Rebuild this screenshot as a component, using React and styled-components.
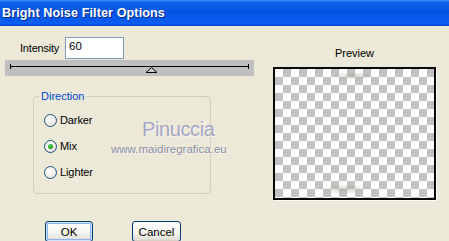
import React from "react";
import styled, { createGlobalStyle } from "styled-components";

const Global = createGlobalStyle`
  html, body { margin: 0; padding: 0; background: #ECE9D8; }
  body { font-family: "Liberation Sans", Arial, sans-serif; font-size: 11px; color: #000; }
`;

const Window = styled.div`
  position: relative;
  width: 449px;
  height: 241px;
  background: #ECE9D8;
  overflow: hidden;
  display: flex;
  flex-direction: column;
`;

const TitleBar = styled.div`
  height: 26px;
  flex: none;
  display: flex;
  align-items: center;
  padding-left: 2px;
  background: linear-gradient(180deg, #3A8CF8 0%, #0F63EC 10%, #0554E4 45%, #075BEE 80%, #0A5FF2 90%, #0044CC 100%);
  color: #fff;
  font-weight: bold;
  font-size: 12.6px;
  letter-spacing: 0.1px;
  text-shadow: 1px 1px 0 #0A2A8A;
`;

const Body = styled.div`
  display: flex;
  flex: 1;
`;

const LeftCol = styled.div`
  width: 273px;
  display: flex;
  flex-direction: column;
`;

const RightCol = styled.div`
  width: 163px;
  display: flex;
  flex-direction: column;
  align-items: center;
`;

const IntensityRow = styled.div`
  display: flex;
  align-items: center;
  margin-top: 11px;
  padding-left: 20px;
  height: 22px;
`;

const Label = styled.span`
  width: 45px;
  letter-spacing: -0.2px;
`;

const NumberInput = styled.div`
  box-sizing: border-box;
  width: 59px;
  height: 22px;
  background: #fff;
  border: 1px solid #7F9DB9;
  padding: 2px 0 0 3px;
  font-size: 11.5px;
`;

const SliderBand = styled.div`
  margin: 1px 0 0 5px;
  width: 248px;
  height: 16px;
  background: #BFBFBF;
  box-shadow: 1px 0 1px #C8C8C4;
`;

const GroupBox = styled.div`
  box-sizing: border-box;
  margin: 20px 0 0 33px;
  width: 178px;
  height: 98px;
  border: 1px solid #D0CFC0;
  border-radius: 4px;
  display: flex;
  flex-direction: column;
`;

const Legend = styled.div`
  margin: -7px 0 0 5px;
  padding: 0 2px;
  width: fit-content;
  line-height: 13px;
  background: #ECE9D8;
  color: #0046D5;
`;

const RadioList = styled.div`
  padding: 4px 0 0 10px;
  display: flex;
  flex-direction: column;
`;

const RadioRow = styled.div`
  height: 26px;
  display: flex;
  align-items: center;
  gap: 3px;
`;

const RadioCircle = styled.span`
  box-sizing: border-box;
  width: 13px;
  height: 13px;
  border-radius: 50%;
  border: 1px solid #1C5180;
  background: radial-gradient(circle at 35% 35%, #FFFFFF 0%, #F4F3EE 45%, #D8D6CB 100%);
  display: flex;
  align-items: center;
  justify-content: center;
  &::after {
    content: "";
    display: ${(p) => (p.$checked ? "block" : "none")};
    width: 5px;
    height: 5px;
    border-radius: 50%;
    background: radial-gradient(circle at 40% 40%, #5BD65B 0%, #21A121 60%, #1A8A1A 100%);
  }
`;

const RadioText = styled.span`
  letter-spacing: -0.1px;
`;

const ButtonRow = styled.div`
  display: flex;
  gap: 39px;
  margin-top: 27px;
  padding-left: 45px;
`;

const Button = styled.div`
  box-sizing: border-box;
  width: ${(p) => p.$w}px;
  height: 21px;
  border: 1px solid #003C74;
  border-radius: 3px;
  background: linear-gradient(180deg, #FFFFFF 0%, #F5F5F1 55%, #E6E5DD 85%, #D7D2C6 100%);
  box-shadow: ${(p) =>
    p.$default
      ? "inset 0 0 0 1px #CEE3FC, inset 0 0 0 2px #8DB2EE"
      : "inset 0 -1px 0 #D6D0C5"};
  display: flex;
  align-items: center;
  justify-content: center;
  font-size: 11.5px;
`;

const PreviewLabel = styled.div`
  margin-top: 21px;
  line-height: 13px;
  font-size: 11px;
`;

const PreviewBox = styled.div`
  box-sizing: border-box;
  margin-top: 7px;
  width: 163px;
  height: 133px;
  border: 2px solid #0A0A0A;
  box-shadow: 1px 1px 0 #FBFBF8;
  background:
    radial-gradient(ellipse 22px 4px at 78px 7px, rgba(160,155,140,0.45), transparent),
    radial-gradient(ellipse 26px 5px at 70px 120px, rgba(160,155,140,0.45), transparent),
    repeating-conic-gradient(#C2C2C2 0 25%, #FFFFFF 0 50%) 0 0 / 16px 16px;
`;

const Watermark = styled.div`
  position: absolute;
  left: 111px;
  top: 119px;
  display: flex;
  flex-direction: column;
  pointer-events: none;
`;

const WmName = styled.span`
  margin-left: 31px;
  font-size: 20px;
  line-height: 20px;
  letter-spacing: -0.4px;
  color: #A6A6C2;
  text-shadow: 1px 1px 0 #F6F6F6;
`;

const WmUrl = styled.span`
  margin-top: 4px;
  font-size: 11.5px;
  line-height: 12px;
  color: #8E8EA2;
  text-shadow: 1px 1px 0 #F4F4F4;
`;

function Slider() {
  return (
    <SliderBand>
      <svg width="248" height="16" viewBox="0 0 248 16">
        <line x1="6" y1="6.5" x2="243" y2="6.5" stroke="#000" strokeWidth="1" />
        <line x1="5.5" y1="4" x2="5.5" y2="9" stroke="#000" strokeWidth="1" />
        <line x1="243.5" y1="4" x2="243.5" y2="9" stroke="#000" strokeWidth="1" />
        <polygon points="146.5,7.5 152,12.5 141,12.5" fill="#C8C8C8" stroke="#000" strokeWidth="1" />
      </svg>
    </SliderBand>
  );
}

const options = [
  { label: "Darker", checked: false },
  { label: "Mix", checked: true },
  { label: "Lighter", checked: false },
];

export default function App() {
  return (
    <Window>
      <Global />
      <TitleBar>Bright Noise Filter Options</TitleBar>
      <Body>
        <LeftCol>
          <IntensityRow>
            <Label>Intensity</Label>
            <NumberInput>60</NumberInput>
          </IntensityRow>
          <Slider />
          <GroupBox>
            <Legend>Direction</Legend>
            <RadioList>
              {options.map((o) => (
                <RadioRow key={o.label}>
                  <RadioCircle $checked={o.checked} />
                  <RadioText>{o.label}</RadioText>
                </RadioRow>
              ))}
            </RadioList>
          </GroupBox>
          <ButtonRow>
            <Button $w={48} $default>OK</Button>
            <Button $w={49}>Cancel</Button>
          </ButtonRow>
        </LeftCol>
        <RightCol>
          <PreviewLabel>Preview</PreviewLabel>
          <PreviewBox />
        </RightCol>
      </Body>
      <Watermark>
        <WmName>Pinuccia</WmName>
        <WmUrl>www.maidiregrafica.eu</WmUrl>
      </Watermark>
    </Window>
  );
}
